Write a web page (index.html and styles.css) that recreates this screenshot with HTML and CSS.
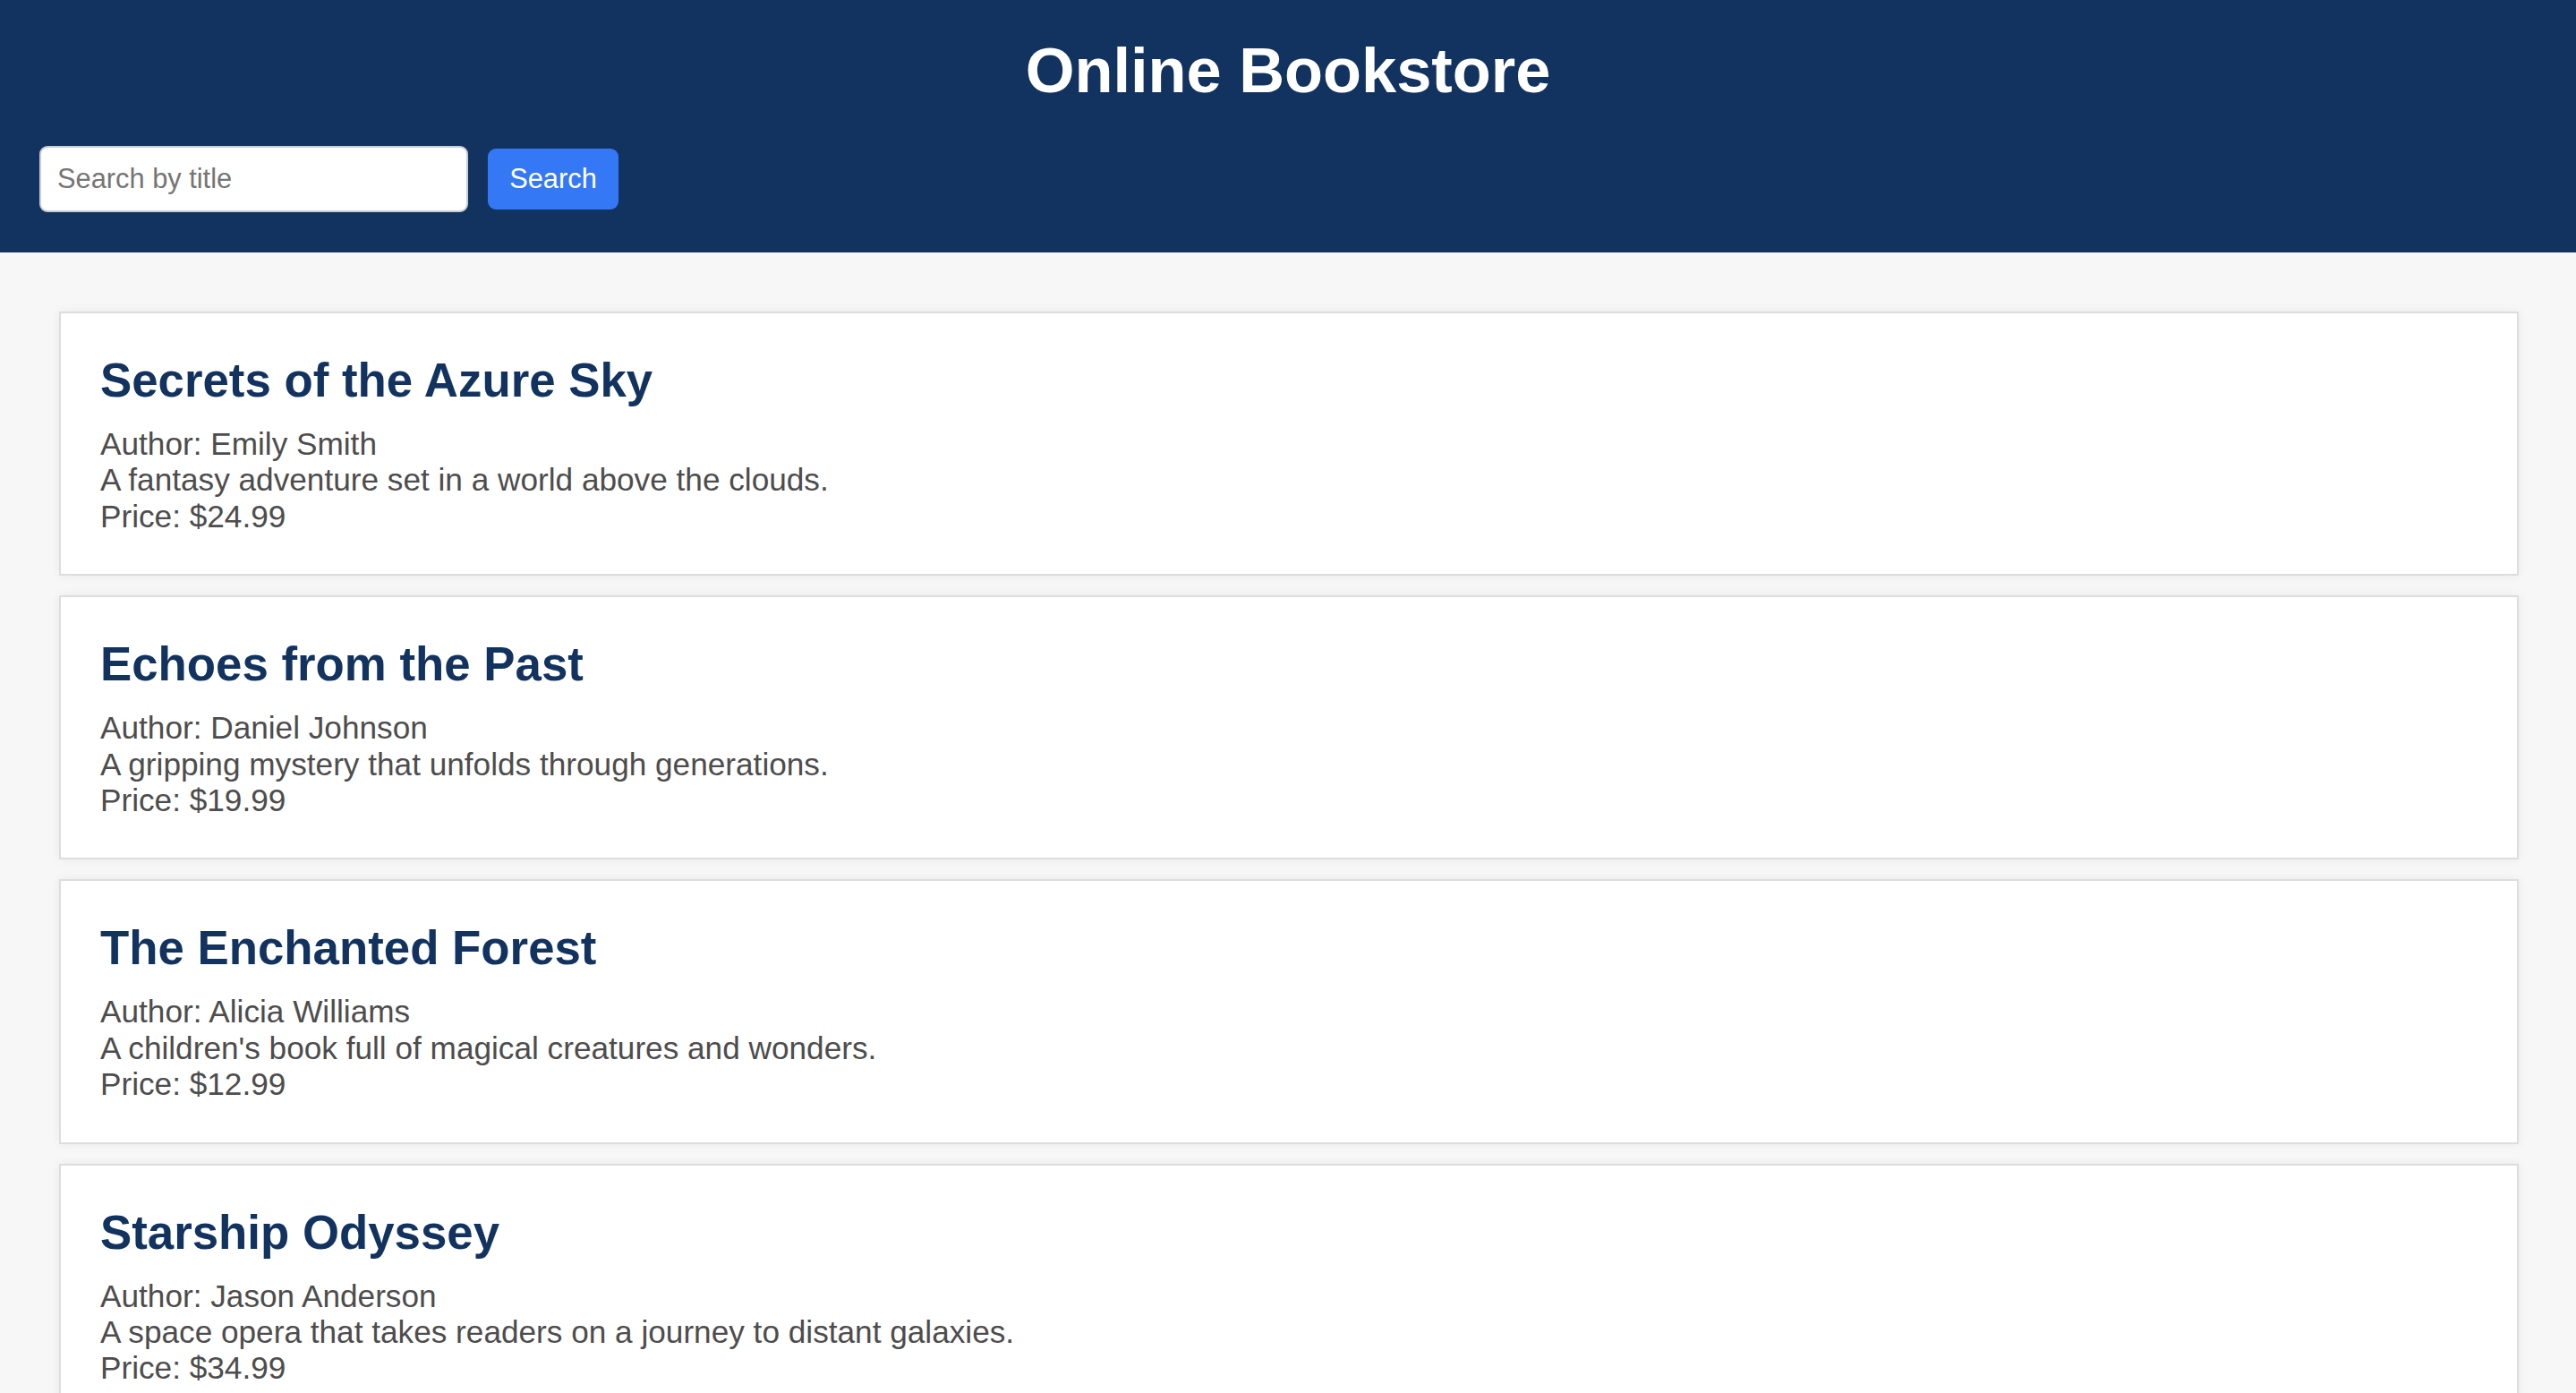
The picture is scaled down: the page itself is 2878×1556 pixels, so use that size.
FILE: index.html
```html
<!DOCTYPE html>
<html lang="en">
<head>
<meta charset="utf-8">
<title>Online Bookstore</title>
<link rel="stylesheet" href="styles.css">
</head>
<body>
<header class="site-header">
  <h1 class="site-title">Online Bookstore</h1>
  <form class="search-form" onsubmit="return false;">
    <input class="search-input" type="text" placeholder="Search by title">
    <button class="search-button" type="submit">Search</button>
  </form>
</header>
<main class="book-list">
  <article class="book-card">
    <h2 class="book-title">Secrets of the Azure Sky</h2>
    <div class="book-line">Author: Emily Smith</div>
    <div class="book-line">A fantasy adventure set in a world above the clouds.</div>
    <div class="book-line">Price: $24.99</div>
  </article>
  <article class="book-card">
    <h2 class="book-title">Echoes from the Past</h2>
    <div class="book-line">Author: Daniel Johnson</div>
    <div class="book-line">A gripping mystery that unfolds through generations.</div>
    <div class="book-line">Price: $19.99</div>
  </article>
  <article class="book-card">
    <h2 class="book-title">The Enchanted Forest</h2>
    <div class="book-line">Author: Alicia Williams</div>
    <div class="book-line">A children's book full of magical creatures and wonders.</div>
    <div class="book-line">Price: $12.99</div>
  </article>
  <article class="book-card">
    <h2 class="book-title">Starship Odyssey</h2>
    <div class="book-line">Author: Jason Anderson</div>
    <div class="book-line">A space opera that takes readers on a journey to distant galaxies.</div>
    <div class="book-line">Price: $34.99</div>
  </article>
</main>
</body>
</html>
```
FILE: styles.css
```css
html, body {
  margin: 0;
  padding: 0;
}

body {
  background: #f7f7f7;
  font-family: "Liberation Sans", Arial, Helvetica, sans-serif;
  color: #4d4d4d;
}

.site-header {
  background: #12335f;
  padding: 38px 44px 45px;
}

.site-title {
  margin: 0 0 44px;
  color: #ffffff;
  font-size: 70.4px;
  line-height: 81px;
  font-weight: bold;
  text-align: center;
}

.search-form {
  display: flex;
  align-items: center;
  gap: 22px;
}

.search-input {
  box-sizing: border-box;
  width: 479px;
  height: 74px;
  padding: 0 18px;
  border: 2px solid #c9cdd4;
  border-radius: 9px;
  background: #ffffff;
  font-family: "Liberation Sans", Arial, Helvetica, sans-serif;
  font-size: 30.8px;
  color: #333333;
  outline: none;
}

.search-input::placeholder {
  color: #757575;
}

.search-button {
  box-sizing: border-box;
  width: 146px;
  height: 68px;
  padding: 0;
  border: none;
  border-radius: 9px;
  background: #3478f6;
  color: #ffffff;
  font-family: "Liberation Sans", Arial, Helvetica, sans-serif;
  font-size: 30.8px;
  cursor: pointer;
}

.book-list {
  padding: 44px;
}

.book-card {
  background: #ffffff;
  border: 2px solid #dddddd;
  box-shadow: 0 0 11px rgba(0, 0, 0, 0.06);
  padding: 44px;
  margin: 22px 20px 22px 22px;
}

.book-title {
  margin: 0 0 21px;
  color: #12335f;
  font-size: 52.8px;
  line-height: 61px;
  font-weight: bold;
}

.book-line {
  font-size: 35.2px;
  line-height: 40.4px;
  color: #4d4d4d;
}
```
